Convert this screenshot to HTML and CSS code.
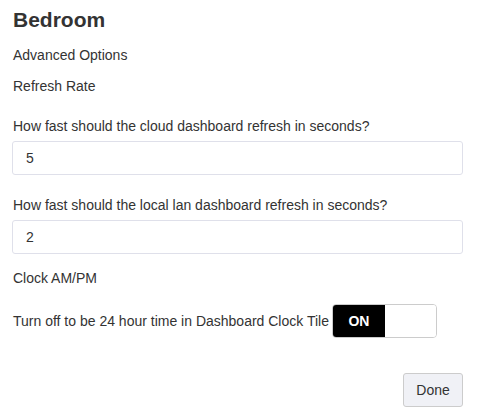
FILE: index.html
```html
<!DOCTYPE html>
<html lang="en">
<head>
  <meta charset="UTF-8" />
  <title>Bedroom</title>
  <link rel="stylesheet" href="styles.css">
</head>
<body>
  <div class="panel">
    <h2 class="title">Bedroom</h2>
    <p class="section">Advanced Options</p>
    <p class="section">Refresh Rate</p>

    <div class="field">
      <label class="label" for="cloud-rate">How fast should the cloud dashboard refresh in seconds?</label>
      <input class="input" id="cloud-rate" type="text" value="5" />
    </div>

    <div class="field">
      <label class="label" for="lan-rate">How fast should the local lan dashboard refresh in seconds?</label>
      <input class="input" id="lan-rate" type="text" value="2" />
    </div>

    <p class="section">Clock AM/PM</p>

    <div class="toggle-row">
      <span>Turn off to be 24 hour time in Dashboard Clock Tile</span>
      <div class="toggle">
        <span class="toggle-on">ON</span>
        <span class="toggle-off"></span>
      </div>
    </div>

    <div class="actions">
      <button class="btn">Done</button>
    </div>
  </div>
</body>
</html>
```

FILE: styles.css
```css
body {
  margin: 0;
  font-family: "Liberation Sans", Arial, sans-serif;
  font-size: 14px;
  color: #333;
  background: #fff;
}
.panel {
  padding: 7px 15px 0 12px;
}
.title {
  margin: 0 0 0 1px;
  font-size: 21px;
  line-height: 26px;
  font-weight: bold;
}
.section {
  margin: 0 0 0 1px;
  line-height: 20px;
}
.title + .section {
  margin-top: 12px;
}
.section + .section {
  margin-top: 11px;
}
.field {
  margin-top: 20px;
}
.field + .field {
  margin-top: 20px;
}
.label {
  display: block;
  margin-left: 1px;
  line-height: 20px;
}
.input {
  display: block;
  box-sizing: border-box;
  width: 100%;
  height: 34px;
  margin-top: 5px;
  padding: 0 13px;
  border: 1px solid #dfe0ea;
  border-radius: 3px;
  font-family: inherit;
  font-size: 14px;
  color: #333;
}
.field + .section {
  margin-top: 14px;
}
.toggle-row {
  display: flex;
  align-items: center;
  margin: 16px 0 0 1px;
}
.toggle {
  display: flex;
  width: 105px;
  height: 34px;
  box-sizing: border-box;
  margin-left: 3px;
  border: 1px solid #ccc;
  border-radius: 4px;
  overflow: hidden;
}
.toggle-on {
  width: 52px;
  background: #000;
  color: #fff;
  font-weight: bold;
  line-height: 32px;
  text-align: center;
}
.toggle-off {
  flex: 1;
  background: #fff;
}
.actions {
  display: flex;
  justify-content: flex-end;
  margin-top: 35px;
}
.btn {
  width: 60px;
  height: 34px;
  border: 1px solid #ccc;
  border-radius: 3px;
  background: #f0f1f6;
  font-family: inherit;
  font-size: 14px;
  color: #333;
}
```
